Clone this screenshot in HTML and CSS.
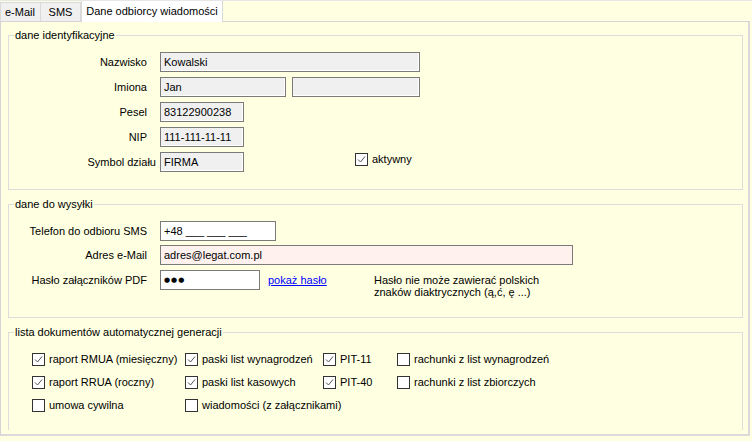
FILE: index.html
```html
<!DOCTYPE html>
<html lang="pl">
<head>
    <meta charset="UTF-8">
    <meta name="viewport" content="width=device-width, initial-scale=1.0">
    <title>Dane odbiorcy wiadomości</title>
    <link rel="stylesheet" href="styles.css">
</head>
<body>
    <div class="tabs">
        <div class="tab tab-mail">e-Mail</div>
        <div class="tab tab-sms">SMS</div>
        <div class="tab active">Dane odbiorcy wiadomości</div>
    </div>

    <div class="panel">
        <div class="page">

            <fieldset class="group">
                <legend>dane identyfikacyjne</legend>
                <div class="body">
                    <div class="row">
                        <label class="lbl" for="nazwisko">Nazwisko</label>
                        <input class="field ro w-long" id="nazwisko" value="Kowalski" readonly>
                    </div>
                    <div class="row">
                        <label class="lbl" for="imie1">Imiona</label>
                        <input class="field ro w-name" id="imie1" value="Jan" readonly>
                        <input class="field ro w-name2" id="imie2" value="" readonly>
                    </div>
                    <div class="row">
                        <label class="lbl" for="pesel">Pesel</label>
                        <input class="field ro w-short" id="pesel" value="83122900238" readonly>
                    </div>
                    <div class="row">
                        <label class="lbl" for="nip">NIP</label>
                        <input class="field ro w-short" id="nip" value="111-111-11-11" readonly>
                    </div>
                    <div class="row">
                        <label class="lbl lbl-wide" for="symbol">Symbol działu</label>
                        <input class="field ro w-short" id="symbol" value="FIRMA" readonly>
                        <label class="check check-active">
                            <span class="box"><svg width="11" height="11" viewBox="0 0 11 11"><path d="M2 5.5 L4.5 8 L9 2.5"/></svg></span>
                            aktywny
                        </label>
                    </div>
                </div>
            </fieldset>

            <fieldset class="group">
                <legend>dane do wysyłki</legend>
                <div class="body body-send">
                    <div class="row">
                        <label class="lbl" for="telefon">Telefon do odbioru SMS</label>
                        <input class="field w-phone" id="telefon" value="+48 ___ ___ ___">
                    </div>
                    <div class="row row-mail">
                        <label class="lbl" for="email">Adres e-Mail</label>
                        <input class="field pink w-mail" id="email" value="adres@legat.com.pl">
                    </div>
                    <div class="row row-pass">
                        <label class="lbl" for="haslo">Hasło załączników PDF</label>
                        <input class="field dots w-pass" id="haslo" value="●●●">
                        <span class="link-wrap"><a href="#">pokaż hasło</a></span>
                        <p class="hint">Hasło nie może zawierać polskich<br>znaków diaktrycznych (ą,ć, ę ...)</p>
                    </div>
                </div>
            </fieldset>

            <fieldset class="group">
                <legend>lista dokumentów automatycznej generacji</legend>
                <div class="body body-docs">
                    <div class="docs">
                        <label class="check"><span class="box"><svg width="11" height="11" viewBox="0 0 11 11"><path d="M2 5.5 L4.5 8 L9 2.5"/></svg></span>raport RMUA (miesięczny)</label>
                        <label class="check"><span class="box"><svg width="11" height="11" viewBox="0 0 11 11"><path d="M2 5.5 L4.5 8 L9 2.5"/></svg></span>paski list wynagrodzeń</label>
                        <label class="check"><span class="box"><svg width="11" height="11" viewBox="0 0 11 11"><path d="M2 5.5 L4.5 8 L9 2.5"/></svg></span>PIT-11</label>
                        <label class="check"><span class="box"></span>rachunki z list wynagrodzeń</label>

                        <label class="check"><span class="box"><svg width="11" height="11" viewBox="0 0 11 11"><path d="M2 5.5 L4.5 8 L9 2.5"/></svg></span>raport RRUA (roczny)</label>
                        <label class="check"><span class="box"><svg width="11" height="11" viewBox="0 0 11 11"><path d="M2 5.5 L4.5 8 L9 2.5"/></svg></span>paski list kasowych</label>
                        <label class="check"><span class="box"><svg width="11" height="11" viewBox="0 0 11 11"><path d="M2 5.5 L4.5 8 L9 2.5"/></svg></span>PIT-40</label>
                        <label class="check"><span class="box"></span>rachunki z list zbiorczych</label>

                        <label class="check"><span class="box"></span>umowa cywilna</label>
                        <label class="check"><span class="box"></span>wiadomości (z załącznikami)</label>
                    </div>
                </div>
            </fieldset>

        </div>
    </div>
</body>
</html>
```

FILE: styles.css
```css
body {
    margin: 0;
    width: 752px;
    height: 441px;
    overflow: hidden;
    background: #ffffe1;
    font-family: "Liberation Sans", Arial, sans-serif;
    font-size: 11px;
    color: #000;
}

/* tab strip */
.tabs {
    display: flex;
    align-items: flex-end;
    height: 21px;
    box-sizing: border-box;
    border-top: 1px solid #e6e6e6;
}
.tab {
    box-sizing: border-box;
    height: 19px;
    line-height: 18px;
    text-align: center;
    background: #f0f0f0;
    border: 1px solid #d9d9d9;
    border-bottom: none;
}
.tab-mail {
    width: 41px;
    text-align: left;
    padding-left: 4px;
}
.tab-sms {
    width: 41px;
    margin-left: -1px;
}
.tab.active {
    position: relative;
    z-index: 1;
    width: 142px;
    height: 21px;
    line-height: 21px;
    margin-bottom: -1px;
    background: #fff;
    border-top: none;
}

/* tab page */
.panel {
    box-sizing: border-box;
    width: 750px;
    height: 415px;
    border: 1px solid #d4d4d4;
    border-right: 2px solid #dadada;
    border-bottom: 2px solid #dadada;
}
.page {
    box-sizing: border-box;
    height: 408px;
    overflow: hidden;
    padding: 7px 5px 0 7px;
}

.group {
    margin: 0;
    padding: 0;
    min-width: 0;
    border: 1px solid #dcdcdc;
}
.group + .group {
    margin-top: 8px;
}
.group legend {
    margin-left: 5px;
    padding: 0 1px;
    line-height: 13px;
}
.body {
    padding: 10px 0 17px;
}
.body-send {
    padding-bottom: 19px;
}
.body-docs {
    padding: 14px 0 40px 23px;
}

.row {
    display: flex;
    align-items: center;
    height: 20px;
}
.row + .row {
    margin-top: 5px;
}
.row-mail {
    margin-top: 4px !important;
}
.row-pass {
    align-items: flex-start;
    height: auto;
}
.row-pass .lbl {
    line-height: 20px;
}

.lbl {
    box-sizing: border-box;
    width: 151px;
    padding-right: 13px;
    text-align: right;
    white-space: nowrap;
}
.lbl-wide {
    padding-right: 4px;
}

.field {
    box-sizing: border-box;
    height: 20px;
    margin: 0;
    padding: 0 3px;
    font-family: inherit;
    font-size: 11px;
    color: #000;
    background: #fff;
    border: 1px solid #7a7a7a;
    border-radius: 0;
    outline: none;
}
.ro {
    background: #f0f0f0;
    box-shadow: inset -1px -1px 0 #fff;
}
.pink {
    background: #fff1ee;
}
.dots {
    font-family: "DejaVu Sans", sans-serif;
    font-size: 7px;
    letter-spacing: 1px;
}
.w-long { width: 260px; }
.w-name { width: 126px; }
.w-name2 { width: 128px; margin-left: 6px; }
.w-short { width: 84px; }
.w-phone { width: 116px; }
.w-mail { width: 413px; }
.w-pass { width: 100px; }

.link-wrap {
    width: 114px;
    padding-left: 8px;
    box-sizing: border-box;
    line-height: 20px;
}
.link-wrap a {
    color: #0000ff;
}
.hint {
    margin: 4px 0 0;
    line-height: 12px;
}

/* checkboxes */
.check {
    display: flex;
    align-items: center;
    gap: 4px;
    line-height: 13px;
    white-space: nowrap;
}
.box {
    box-sizing: border-box;
    width: 13px;
    height: 13px;
    flex: none;
    background: #fff;
    border: 1px solid #333;
}
.box svg {
    display: block;
}
.box path {
    fill: none;
    stroke: #555;
    stroke-width: 1;
}
.check-active {
    align-self: flex-start;
    margin-top: 1px;
    margin-left: 111px;
}

.docs {
    display: grid;
    grid-template-columns: 153px 138px 74px auto;
    grid-auto-rows: 13px;
    row-gap: 10px;
}
```
